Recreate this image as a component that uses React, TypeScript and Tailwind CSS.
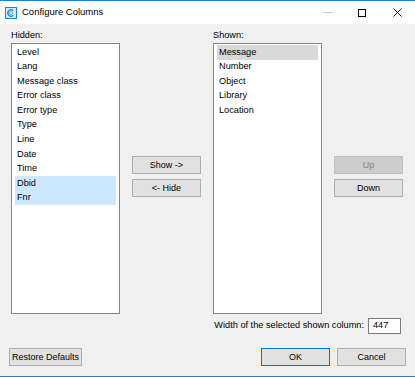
import React from 'react';

const hiddenCols = ['Level', 'Lang', 'Message class', 'Error class', 'Error type', 'Type', 'Line', 'Date', 'Time', 'Dbid', 'Fnr'];
const shownCols = ['Message', 'Number', 'Object', 'Library', 'Location'];
const selectedHidden = ['Dbid', 'Fnr'];

const Btn = ({ label, className = '', disabled = false, primary = false }: {
  label: string;
  className?: string;
  disabled?: boolean;
  primary?: boolean;
}) => (
  <button
    disabled={disabled}
    className={`h-[18px] flex items-center justify-center text-[9px] leading-none border ${
      disabled
        ? 'bg-[#cccccc] border-[#bfbfbf] text-[#838383]'
        : primary
        ? 'bg-[#e1e1e1] border-[#0078d7] text-black'
        : 'bg-[#e1e1e1] border-[#adadad] text-black'
    } ${className}`}
  >
    {label}
  </button>
);

const ListBox = ({ items, selected, focusGray = false }: {
  items: string[];
  selected: string[];
  focusGray?: boolean;
}) => (
  <div className="w-[109px] h-[271px] bg-white border border-[#828790] pt-[1px] px-[3px]">
    {items.map((item) => (
      <div
        key={item}
        className={`h-[14.55px] flex items-center px-[2px] text-[9.2px] leading-none ${
          selected.includes(item) ? (focusGray ? 'bg-[#d9d9d9]' : 'bg-[#cce8ff]') : ''
        }`}
      >
        {item}
      </div>
    ))}
  </div>
);

export default function App() {
  return (
    <div
      className="w-[415px] h-[377px] bg-[#f0f0f0] border-t border-b border-[#1883d7] flex flex-col text-black"
      style={{ fontFamily: '"Liberation Sans", Arial, sans-serif' }}
    >
      {/* title bar */}
      <div className="h-[23px] bg-white flex items-center shrink-0">
        <svg className="ml-[5px]" width="12" height="12" viewBox="0 0 12 12">
          <rect x="0.5" y="0.5" width="11" height="11" fill="#d6ecfb" stroke="#1a84d6" />
          <path d="M8.3 3.7 A3.2 3.2 0 1 0 8.3 8.3" fill="none" stroke="#1a84d6" strokeWidth="1.2" />
          <circle cx="6" cy="6" r="1.6" fill="none" stroke="#5aa8e4" strokeWidth="0.8" />
        </svg>
        <span className="ml-[5px] text-[9.5px]">Configure Columns</span>
        <div className="ml-auto flex items-center h-full">
          <div className="w-[33px] h-full flex items-center justify-center">
            <div className="w-[9px] h-px bg-[#c8c8c8]" />
          </div>
          <div className="w-[36px] h-full flex items-center justify-center">
            <div className="w-[8px] h-[8px] border border-black" />
          </div>
          <div className="w-[35px] h-full flex items-center justify-center">
            <svg width="9" height="9" viewBox="0 0 9 9">
              <path d="M0.5 0.5 L8.5 8.5 M8.5 0.5 L0.5 8.5" stroke="#000" strokeWidth="0.9" />
            </svg>
          </div>
        </div>
      </div>

      {/* body */}
      <div className="flex pl-[11px] pt-[4px]">
        <div className="flex flex-col">
          <div className="h-[15px] text-[9.2px] leading-none pt-[3px]">Hidden:</div>
          <ListBox items={hiddenCols} selected={selectedHidden} />
        </div>

        <div className="ml-[12px] w-[69px] flex flex-col gap-[5px] pt-[128px]">
          <Btn label="Show ->" />
          <Btn label="<- Hide" />
        </div>

        <div className="ml-[12px] flex flex-col">
          <div className="h-[15px] text-[9.2px] leading-none pt-[3px]">Shown:</div>
          <ListBox items={shownCols} selected={['Message']} focusGray />
        </div>

        <div className="ml-[12px] w-[69px] flex flex-col gap-[5px] pt-[128px]">
          <Btn label="Up" disabled />
          <Btn label="Down" />
        </div>
      </div>

      {/* width of column */}
      <div className="flex items-center justify-end pr-[14px] mt-[4px]">
        <span className="text-[9.2px] leading-none">Width of the selected shown column:</span>
        <div className="ml-[4px] w-[33px] h-[16px] bg-white border border-[#7a7a7a] flex items-center px-[4px] text-[9.2px] leading-none">
          447
        </div>
      </div>

      {/* footer buttons */}
      <div className="flex items-center px-[9px] mt-[14px]">
        <Btn label="Restore Defaults" className="w-[73px]" />
        <div className="ml-auto flex gap-[7px]">
          <Btn label="OK" primary className="w-[69px]" />
          <Btn label="Cancel" className="w-[69px]" />
        </div>
      </div>
    </div>
  );
}
